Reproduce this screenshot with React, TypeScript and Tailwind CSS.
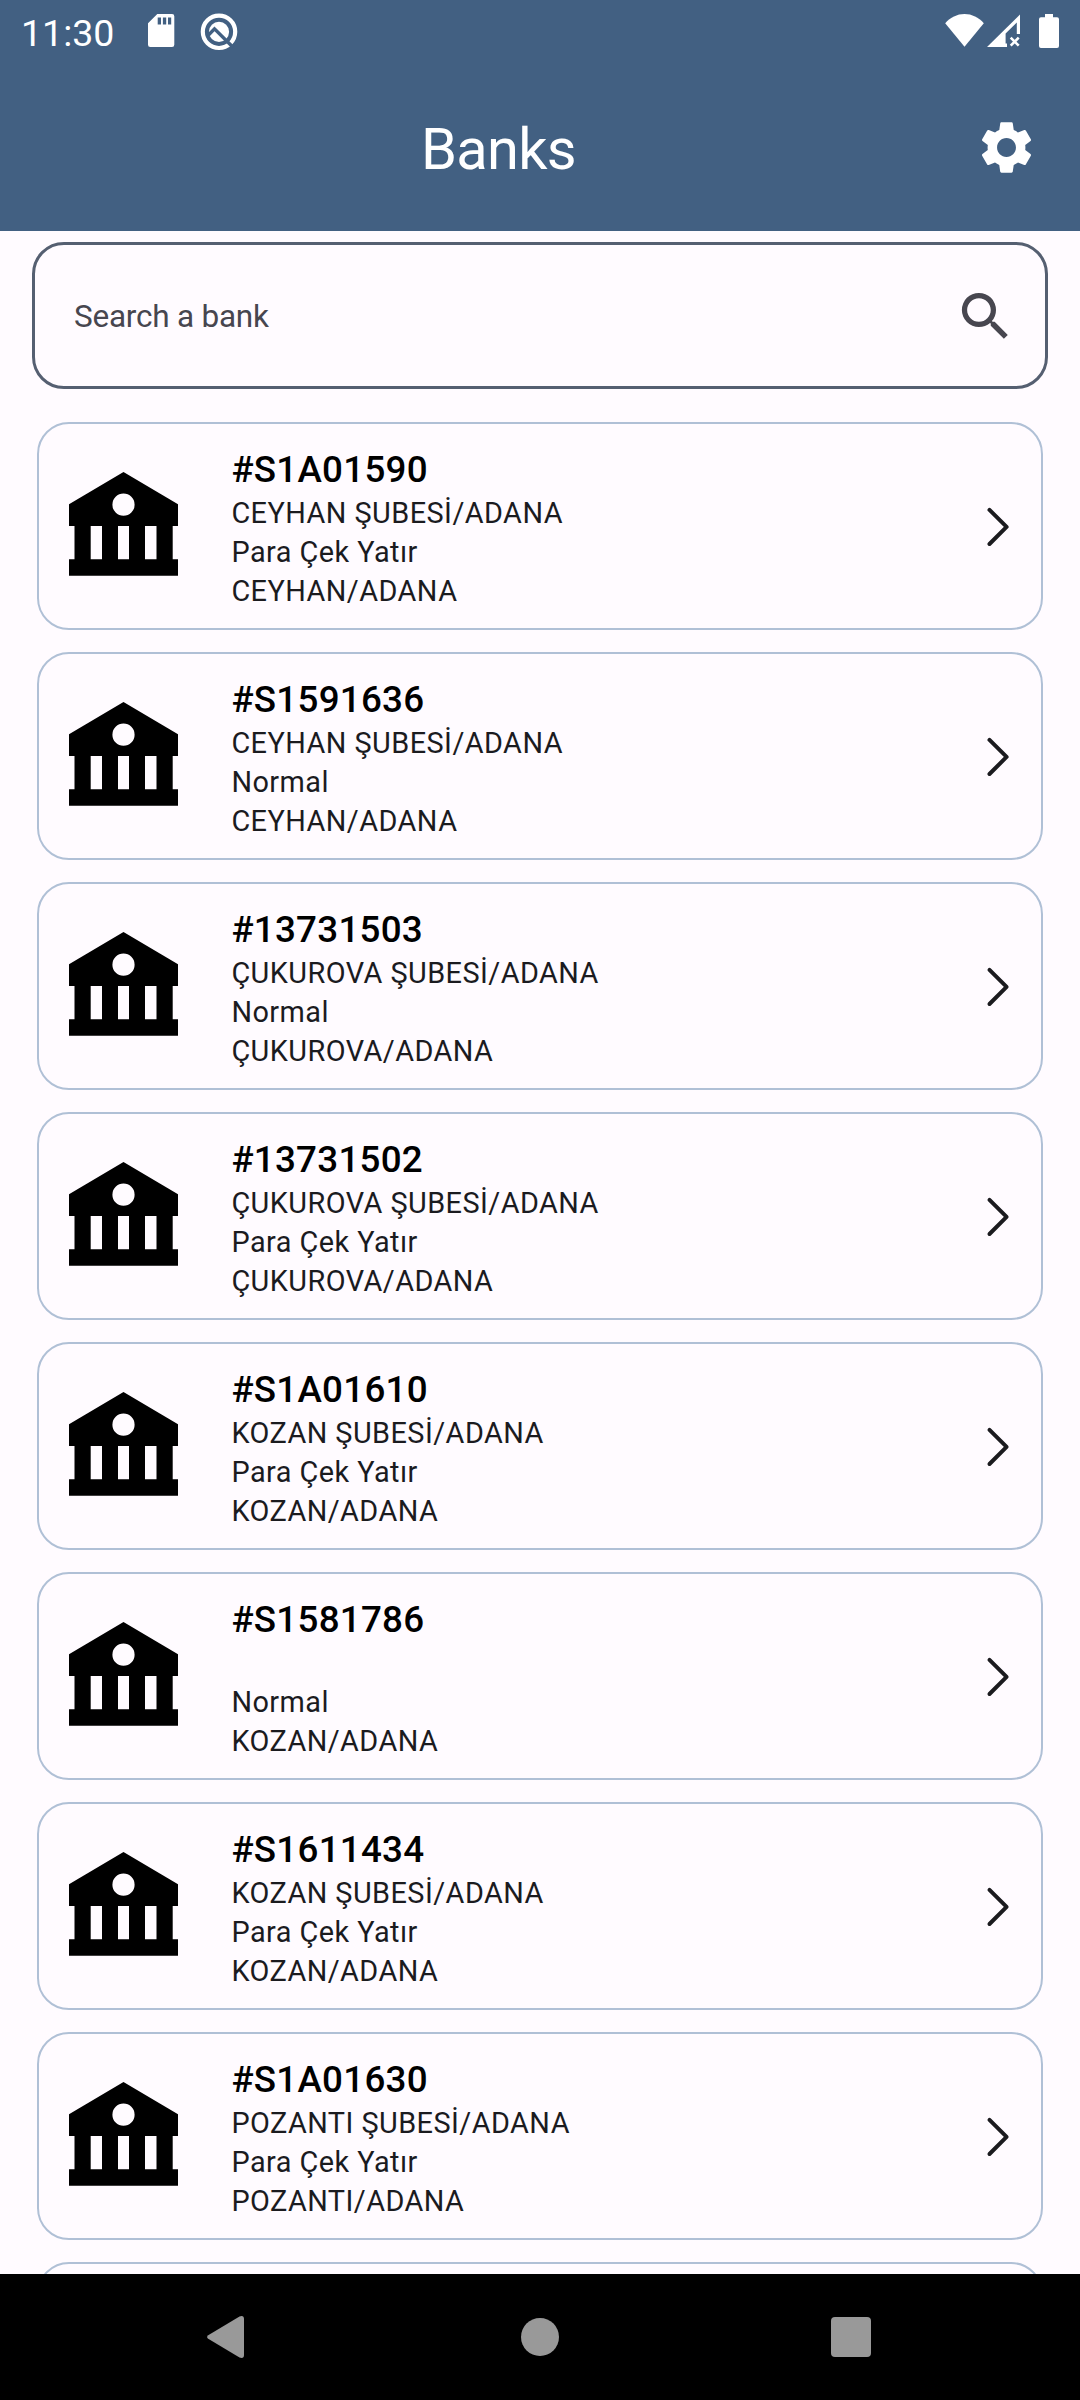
import React from "react";
import { MdSearch, MdSettings } from "react-icons/md";

type Bank = { id: string; branch: string; kind: string; place: string };

const banks: Bank[] = [
  { id: "#S1A01590", branch: "CEYHAN ŞUBESİ/ADANA", kind: "Para Çek Yatır", place: "CEYHAN/ADANA" },
  { id: "#S1591636", branch: "CEYHAN ŞUBESİ/ADANA", kind: "Normal", place: "CEYHAN/ADANA" },
  { id: "#13731503", branch: "ÇUKUROVA ŞUBESİ/ADANA", kind: "Normal", place: "ÇUKUROVA/ADANA" },
  { id: "#13731502", branch: "ÇUKUROVA ŞUBESİ/ADANA", kind: "Para Çek Yatır", place: "ÇUKUROVA/ADANA" },
  { id: "#S1A01610", branch: "KOZAN ŞUBESİ/ADANA", kind: "Para Çek Yatır", place: "KOZAN/ADANA" },
  { id: "#S1581786", branch: "", kind: "Normal", place: "KOZAN/ADANA" },
  { id: "#S1611434", branch: "KOZAN ŞUBESİ/ADANA", kind: "Para Çek Yatır", place: "KOZAN/ADANA" },
  { id: "#S1A01630", branch: "POZANTI ŞUBESİ/ADANA", kind: "Para Çek Yatır", place: "POZANTI/ADANA" },
];

function SdCardIcon() {
  return (
    <svg className="h-[34px] w-[27px]" viewBox="148 15 27 34" fill="#fff">
      <path
        fillRule="evenodd"
        d="M157.3 15H172a2.3 2.3 0 0 1 2.3 2.3V45.7A2.3 2.3 0 0 1 172 48H150.3a2.3 2.3 0 0 1-2.3-2.3V24.3ZM157.7 18.5v7h3.3v-7ZM162.9 18.5v7h3.3v-7ZM168 18.5v7h3.2v-7Z"
      />
    </svg>
  );
}

function DebugIcon() {
  return (
    <svg className="h-[38px] w-[38px]" viewBox="200 12.5 38 38" fill="none">
      <circle cx="219" cy="31.3" r="16.2" stroke="#fff" strokeWidth="4.2" />
      <circle cx="219" cy="31.3" r="10.1" fill="#fff" />
      <path d="M207.500 35.500 214.500 28.300 233 46.800" stroke="#426082" strokeWidth="3.4" />
    </svg>
  );
}

function WifiIcon() {
  return (
    <svg className="h-[34px] w-[40px]" viewBox="945 14 40 34" fill="#fff">
      <path d="M964.5 46.7 945.2 23.2C950.5 17.5 957 14.1 964.5 14.1S978.5 17.5 983.8 23.2Z" />
    </svg>
  );
}

function SignalIcon() {
  return (
    <svg className="h-[34px] w-[34px]" viewBox="987 14 34 34" fill="#fff">
      <path d="M987 47 1020 14.5V34H1016.8V22.5L1005.6 33.5V43.5H1007V47Z" />
      <path d="m1010.7 37.7 8 8m0-8-8 8" stroke="#fff" strokeWidth="2.6" />
    </svg>
  );
}

function BatteryIcon() {
  return (
    <svg className="h-[34px] w-[20px]" viewBox="1039 14 20 34" fill="#fff">
      <path d="M1045 14h8v3.3h4a2 2 0 0 1 2 2V46a2 2 0 0 1-2 2h-16a2 2 0 0 1-2-2V19.3a2 2 0 0 1 2-2h4Z" />
    </svg>
  );
}

function BankIcon() {
  return (
    <svg className="-mt-[4px] h-[104px] w-[109px]" viewBox="0 0 109 104">
      <path
        fillRule="evenodd"
        d="M54.5 0 109 32.3V54H103.7V87.3H109V103.7H0V87.3H5.5V54H0V32.3ZM21.7 54V87.3H33V54ZM49 54V87.3H60V54ZM76 54V87.3H87.5V54ZM54.5 21.6a11.1 11.1 0 1 0 0 22.2 11.1 11.1 0 1 0 0-22.2Z"
      />
    </svg>
  );
}

function ChevronIcon() {
  return (
    <svg className="mt-[2px] h-[40px] w-[24px]" viewBox="986 507 24 40" fill="none">
      <path
        d="M989.5 509.9 1006.6 526.9 989.5 544"
        stroke="#1b1b1f"
        strokeWidth="4"
        strokeLinecap="round"
        strokeLinejoin="round"
      />
    </svg>
  );
}

function BankCard({ bank }: { bank: Bank }) {
  return (
    <button className="flex h-[208px] w-full shrink-0 items-center rounded-[32px] border-2 border-[#b0c0d6] pl-[30px] pr-[31px] text-left">
      <BankIcon />
      <span className="ml-[53.4px] mt-[25px] flex flex-1 flex-col self-start text-[28.875px] leading-[39px] tracking-[0.45px] text-[#1b1b1f]">
        <span className="h-[45px] text-[36.75px] font-medium leading-[42px] tracking-[0.2625px] text-black">{bank.id}</span>
        <span className="h-[39px]">{bank.branch}</span>
        <span className="h-[39px]">{bank.kind}</span>
        <span className="h-[39px]">{bank.place}</span>
      </span>
      <ChevronIcon />
    </button>
  );
}

export default function App() {
  return (
    <div className="flex h-[2400px] w-[1080px] flex-col overflow-hidden bg-[#fffbff] font-['Roboto',sans-serif]">
      <div className="flex h-[231px] shrink-0 flex-col bg-[#426082] text-white">
        <div className="flex h-[63px] items-start pl-[21px] pr-[21px] pt-[14px]">
          <span className="-mt-[2px] w-[127px] text-[37.5px] leading-[43px]">11:30</span>
          <SdCardIcon />
          <span className="-mt-[1.5px] ml-[25px]">
            <DebugIcon />
          </span>
          <span className="flex-1" />
          <WifiIcon />
          <span className="ml-[2px]">
            <SignalIcon />
          </span>
          <span className="ml-[18px]">
            <BatteryIcon />
          </span>
        </div>
        <div className="flex flex-1 items-center pr-[42px]">
          <h1 className="ml-[80px] mt-[3px] flex-1 pr-[58px] text-center text-[57.75px] leading-[74px] tracking-[-0.7px]">Banks</h1>
          <MdSettings className="h-[63px] w-[63px]" />
        </div>
      </div>
      <main className="flex min-h-0 flex-1 flex-col overflow-hidden">
        <div className="mx-[32px] mt-[11px] flex h-[147px] shrink-0 items-center justify-between rounded-[32px] border-[3px] border-[#555f71] pl-[39px] pr-[28px] text-[#47464f]">
          <span className="mt-[3px] text-[31.5px] leading-[42px] tracking-[-0.23px]">Search a bank</span>
          <MdSearch className="mt-[2px] h-[63px] w-[63px]" />
        </div>
        <div className="mt-[33px] flex min-h-0 flex-1 flex-col gap-[22px] overflow-hidden px-[37px]">
          {banks.map((bank) => (
            <BankCard key={bank.id} bank={bank} />
          ))}
          <div className="h-[208px] shrink-0 rounded-[32px] border-2 border-[#b0c0d6]" />
        </div>
      </main>
      <nav className="flex h-[126px] shrink-0 items-center justify-between bg-black pl-[207px] pr-[209px]">
        <svg className="h-[42px] w-[37px]" viewBox="0 0 37 42" fill="#999">
          <path d="M1.2 19.2 32.500.5Q37-1 37 3V39Q37 43 32.5 41.5L1.2 22.8Q-1 21 1.2 19.2Z" />
        </svg>
        <span className="ml-[5px] h-[38px] w-[38px] rounded-full bg-[#999]" />
        <span className="h-[40px] w-[40px] rounded-[4px] bg-[#999]" />
      </nav>
    </div>
  );
}
